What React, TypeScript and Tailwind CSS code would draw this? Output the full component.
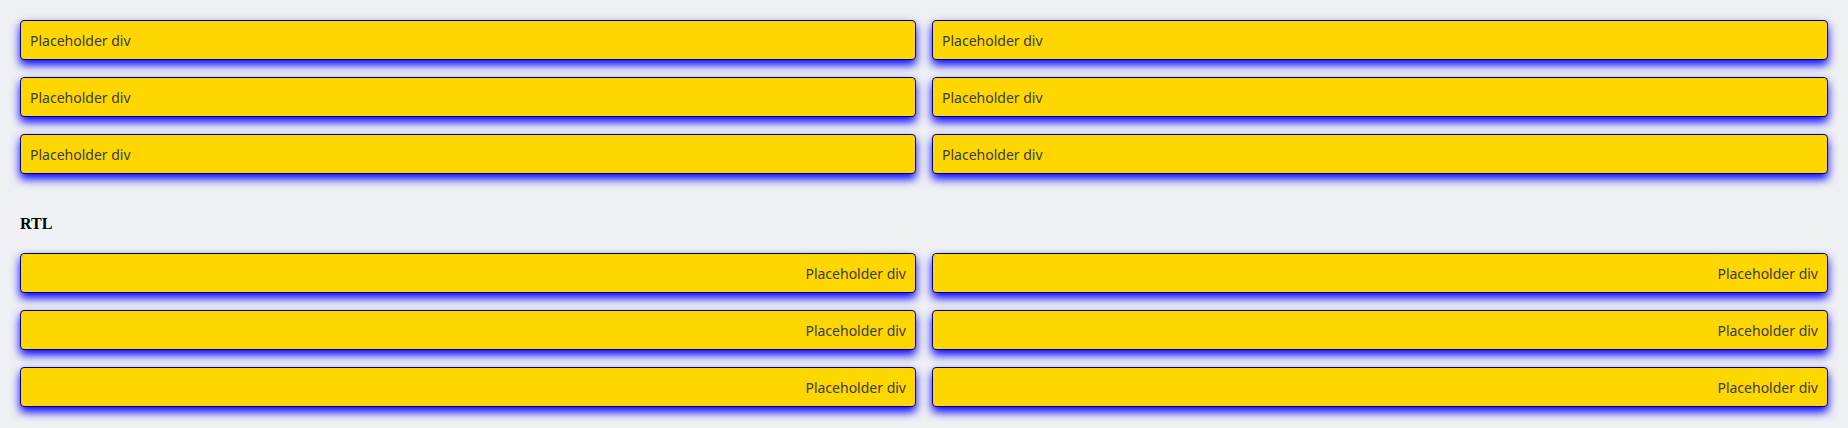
import React from 'react';

const Box: React.FC<{ rtl?: boolean }> = ({ rtl }) => (
  <div
    dir={rtl ? 'rtl' : 'ltr'}
    className="h-[40px] flex items-center px-[9px] bg-[#ffd700] border border-[#00008b] rounded-[4px] shadow-[0_5px_10px_#0000ff] text-[14px] text-[#3b3b3b]"
    style={{ fontFamily: '"Noto Sans", sans-serif' }}
  >
    Placeholder div
  </div>
);

const Grid: React.FC<{ rtl?: boolean }> = ({ rtl }) => (
  <div className="grid grid-cols-2 gap-x-[16px] gap-y-[17px]">
    {Array.from({ length: 6 }).map((_, i) => (
      <Box key={i} rtl={rtl} />
    ))}
  </div>
);

export default function App() {
  return (
    <div className="min-h-screen bg-[#eff0f3] px-[20px] py-[20px]">
      <Grid />
      <h4
        className="mt-[41px] mb-[20px] text-[16px] leading-[18px] font-bold text-black"
        style={{ fontFamily: '"Liberation Serif", serif' }}
      >
        RTL
      </h4>
      <Grid rtl />
    </div>
  );
}
